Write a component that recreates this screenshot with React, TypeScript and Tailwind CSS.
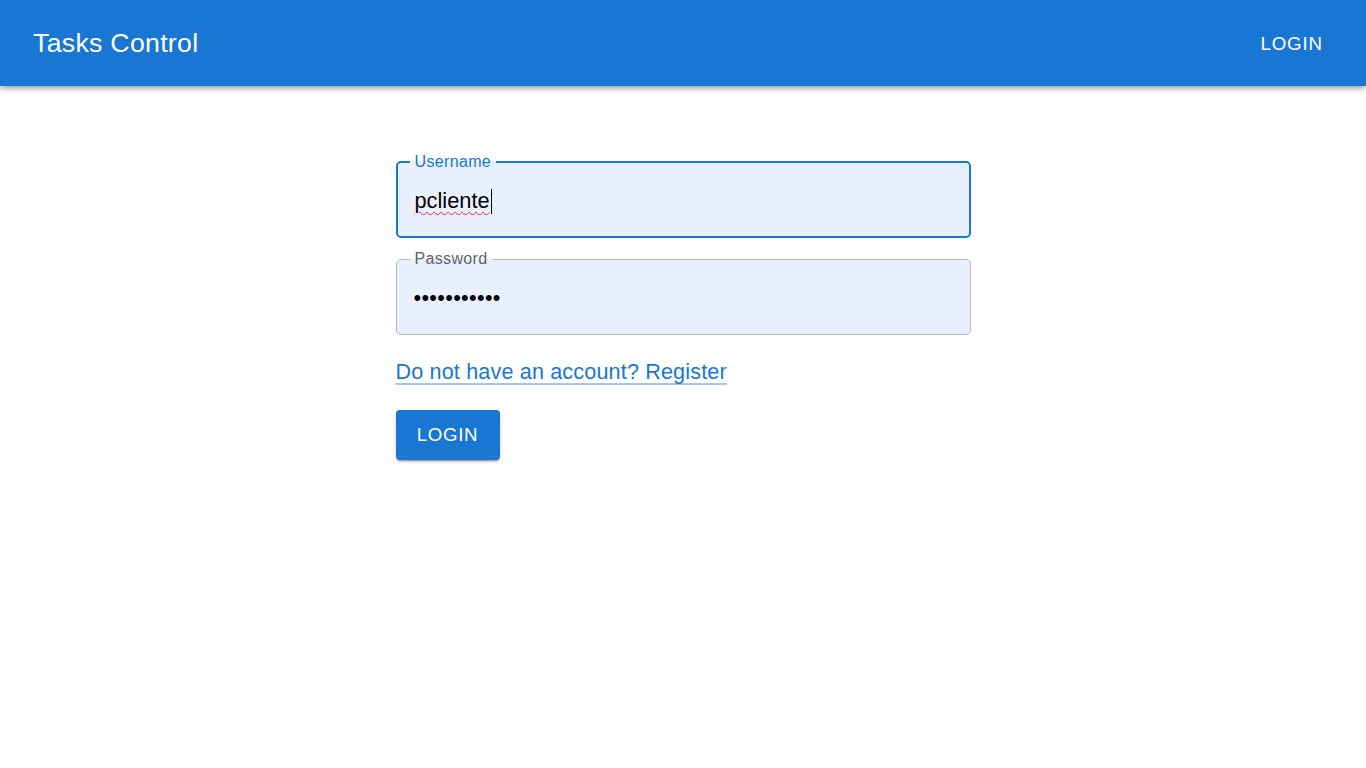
import React from "react";

export default function App() {
  const font = { fontFamily: '"Liberation Sans", Arial, Helvetica, sans-serif' };
  return (
    <div className="min-h-screen bg-white" style={font}>
      <header className="h-[86px] bg-[#1976d2] text-white flex items-center justify-between pl-[33px] pr-[32px] shadow-[0_2px_4px_-1px_rgba(0,0,0,0.2),0_4px_5px_0_rgba(0,0,0,0.14),0_1px_10px_0_rgba(0,0,0,0.12)]">
        <h1 className="text-[26.67px] leading-[1.6] tracking-[0.3px] font-normal">Tasks Control</h1>
        <button className="text-[18.67px] tracking-[0.9px] uppercase px-[11px] pt-[10px] pb-[8px] rounded-[4px] font-normal">
          Login
        </button>
      </header>

      <main className="w-[575px] mx-auto pt-[68px]">
        <fieldset className="border-2 border-[#1976d2] rounded-[5px] bg-[#e8f0fe] pl-[12px] pr-[12px] pb-[6px] m-0">
          <legend className="text-[16px] leading-[16px] px-[5px] text-[#1976d2] tracking-[0.35px]">Username</legend>
          <div className="h-[60px] flex items-center pl-[5px] pt-[2px] text-[21.8px] text-black">
            <span className="underline decoration-wavy decoration-[#ff1a1a] decoration-[1.3px] underline-offset-[3px]">pcliente</span>
            <span className="inline-block w-px h-[25px] bg-black ml-[1px]" />
          </div>
        </fieldset>

        <fieldset className="mt-[13px] border border-[#b3bac6] rounded-[5px] bg-[#e8f0fe] pl-[13px] pr-[13px] pb-[6px] m-0">
          <legend className="text-[16px] leading-[16px] px-[5px] text-[#5f6368] tracking-[0.35px]">Password</legend>
          <input
            type="password"
            readOnly
            value="passwordxyz"
            className="h-[61px] w-full bg-transparent outline-none pl-[4px] text-[21.8px] text-black tracking-[0.3px]"
            style={font}
          />
        </fieldset>

        <div className="mt-[21px] leading-[1.5]">
          <a
            href="#"
            className="text-[21.6px] text-[#1976d2] tracking-[0.15px] underline decoration-[rgba(25,118,210,0.4)] decoration-[1.5px] underline-offset-[4px]"
          >
            Do not have an account? Register
          </a>
        </div>

        <button className="mt-[22px] h-[50px] w-[104px] bg-[#1976d2] text-white text-[18.67px] tracking-[0.7px] uppercase rounded-[4px] shadow-[0_3px_1px_-2px_rgba(0,0,0,0.2),0_2px_2px_0_rgba(0,0,0,0.14),0_1px_5px_0_rgba(0,0,0,0.12)]">
          Login
        </button>
      </main>
    </div>
  );
}
